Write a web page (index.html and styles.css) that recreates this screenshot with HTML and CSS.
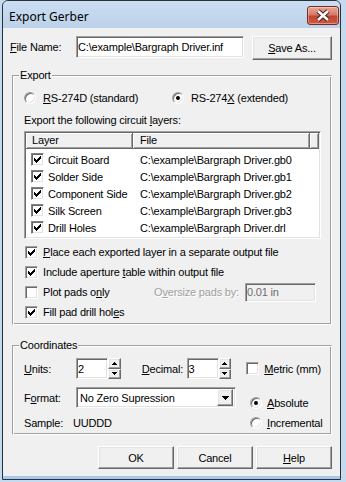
FILE: index.html
```html
<!DOCTYPE html>
<html lang="en">
<head>
    <meta charset="UTF-8">
    <title>Export Gerber</title>
    <link rel="stylesheet" href="styles.css">
</head>
<body>
    <!-- shared pixel glyphs -->
    <svg class="defs" width="0" height="0">
        <symbol id="check" viewBox="0 0 7 7"><path d="M6 0h1v1H6zM5 1h2v1H5zM0 2h1v1H0zM4 2h3v1H4zM0 3h2v1H0zM3 3h3v1H3zM0 4h5v1H0zM1 5h3v1H1zM2 6h1v1H2z"/></symbol>
        <symbol id="up" viewBox="0 0 5 3"><path d="M2 0h1v1H2zM1 1h3v1H1zM0 2h5v1H0z"/></symbol>
        <symbol id="down" viewBox="0 0 5 3"><path d="M0 0h5v1H0zM1 1h3v1H1zM2 2h1v1H2z"/></symbol>
        <symbol id="drop" viewBox="0 0 7 4"><path d="M0 0h7v1H0zM1 1h5v1H1zM2 2h3v1H2zM3 3h1v1H3z"/></symbol>
    </svg>

    <div class="window">
        <div class="titlebar">
            <span class="title">Export Gerber</span>
            <span class="close">
                <svg width="30" height="17" viewBox="0 0 30 17">
                    <path class="x-outline" d="M10 4l10 9M20 4l-10 9"/>
                    <path class="x-fill" d="M10 4l10 9M20 4l-10 9"/>
                </svg>
            </span>
        </div>

        <div class="client">
            <div class="file-row">
                <label class="file-label"><u>F</u>ile Name:</label>
                <input class="field file-field" type="text" value="C:\example\Bargraph Driver.inf">
                <button class="btn save-btn"><u>S</u>ave As...</button>
            </div>

            <div class="group export-group">
                <div class="group-title">Export</div>
                <div class="radio-row">
                    <span class="option first-option"><span class="radio"></span><span><u>R</u>S-274D (standard)</span></span>
                    <span class="option"><span class="radio on"></span><span>RS-274<u>X</u> (extended)</span></span>
                </div>
                <div class="caption">Export the following circuit <u>l</u>ayers:</div>
                <div class="listview">
                    <div class="lv-header">
                        <span class="lv-col col-layer">Layer</span>
                        <span class="lv-col col-file">File</span>
                        <span class="lv-col col-rest"></span>
                    </div>
                    <div class="lv-rows">
                        <div class="lv-row"><span class="col-layer"><span class="checkbox list-box"><svg><use href="#check"/></svg></span>Circuit Board</span><span class="col-file">C:\example\Bargraph Driver.gb0</span></div>
                        <div class="lv-row"><span class="col-layer"><span class="checkbox list-box"><svg><use href="#check"/></svg></span>Solder Side</span><span class="col-file">C:\example\Bargraph Driver.gb1</span></div>
                        <div class="lv-row"><span class="col-layer"><span class="checkbox list-box"><svg><use href="#check"/></svg></span>Component Side</span><span class="col-file">C:\example\Bargraph Driver.gb2</span></div>
                        <div class="lv-row"><span class="col-layer"><span class="checkbox list-box"><svg><use href="#check"/></svg></span>Silk Screen</span><span class="col-file">C:\example\Bargraph Driver.gb3</span></div>
                        <div class="lv-row"><span class="col-layer"><span class="checkbox list-box"><svg><use href="#check"/></svg></span>Drill Holes</span><span class="col-file">C:\example\Bargraph Driver.drl</span></div>
                    </div>
                </div>

                <div class="check-row"><span class="checkbox"><svg><use href="#check"/></svg></span><span><u>P</u>lace each exported layer in a separate output file</span></div>
                <div class="check-row"><span class="checkbox"><svg><use href="#check"/></svg></span><span>Include aperture <u>t</u>able within output file</span></div>
                <div class="check-row">
                    <span class="checkbox"></span><span class="pads-label">Plot pads o<u>n</u>ly</span>
                    <span class="disabled-label">O<u>v</u>ersize pads by:</span>
                    <input class="field oversize-field" type="text" value="0.01 in" disabled>
                </div>
                <div class="check-row"><span class="checkbox"><svg><use href="#check"/></svg></span><span>Fill pad drill hol<u>e</u>s</span></div>
            </div>

            <div class="group coord-group">
                <div class="group-title">Coordinates</div>
                <div class="units-row">
                    <label class="row-label"><u>U</u>nits:</label>
                    <input class="field spin-field" type="text" value="2">
                    <span class="spinner"><span class="spin-btn"><svg><use href="#up"/></svg></span><span class="spin-btn"><svg><use href="#down"/></svg></span></span>
                    <label class="decimal-label"><u>D</u>ecimal:</label>
                    <input class="field spin-field" type="text" value="3">
                    <span class="spinner"><span class="spin-btn"><svg><use href="#up"/></svg></span><span class="spin-btn"><svg><use href="#down"/></svg></span></span>
                    <span class="checkbox metric-box"></span><span><u>M</u>etric (mm)</span>
                </div>
                <div class="lower-block">
                    <div class="left-col">
                        <div class="format-row">
                            <label class="row-label">F<u>o</u>rmat:</label>
                            <span class="field combo"><span class="combo-text">No Zero Supression</span><span class="combo-btn"><svg><use href="#drop"/></svg></span></span>
                        </div>
                        <div class="sample-row">
                            <span class="sample-label">Sample:</span><span>UUDDD</span>
                        </div>
                    </div>
                    <div class="right-col">
                        <span class="option abs-option"><span class="radio on"></span><span><u>A</u>bsolute</span></span>
                        <span class="option inc-option"><span class="radio"></span><span><u>I</u>ncremental</span></span>
                    </div>
                </div>
            </div>

            <div class="button-row">
                <button class="btn">OK</button>
                <button class="btn">Cancel</button>
                <button class="btn"><u>H</u>elp</button>
            </div>
        </div>
    </div>
</body>
</html>
```

FILE: styles.css
```css
body {
    margin: 0;
    background-color: #c6daef;
    font-family: "Liberation Sans", Arial, sans-serif;
    font-size: 11px;
    letter-spacing: -0.18px;
    white-space: nowrap;
    color: #000;
}
.defs {
    position: absolute;
    width: 0;
    height: 0;
}

/* window frame */
.window {
    margin-left: 2px;
    width: 337px;
    height: 478px;
    background-color: #a9c8ea;
    border: 1px solid #27313c;
    border-radius: 6px 6px 0 0;
    display: flex;
    flex-direction: column;
}
.titlebar {
    height: 27px;
    display: flex;
    justify-content: space-between;
    align-items: flex-start;
    background: linear-gradient(#cbddf1, #bcd2ea);
    border-radius: 5px 5px 0 0;
}
.title {
    font-family: "Noto Sans", "Open Sans", sans-serif;
    font-size: 12px;
    letter-spacing: 0;
    line-height: 25px;
    padding: 3px 0 0 6px;
}
.close {
    margin: 5px 1px 0 0;
    width: 32px;
    height: 19px;
    box-sizing: border-box;
    border: 1px solid #7a2a21;
    border-radius: 3px;
    background: linear-gradient(#e9a898 0%, #d77a66 45%, #c4442f 55%, #cc5a43 100%);
    box-shadow: inset 0 0 0 1px rgba(255, 255, 255, 0.35);
    display: flex;
}
.close svg {
    display: block;
}
.x-outline {
    stroke: #4a2420;
    stroke-width: 4.6;
    fill: none;
}
.x-fill {
    stroke: #fff;
    stroke-width: 2.4;
    fill: none;
}

.client {
    height: 448px;
    box-sizing: border-box;
    background-color: #f0f0f0;
    padding: 8px 8px 0 9px;
}

/* classic 3d controls */
.field {
    box-sizing: border-box;
    margin: 0;
    padding: 0 1px;
    font: inherit;
    letter-spacing: inherit;
    color: #000;
    background-color: #fff;
    border: 1px solid;
    border-color: #a0a0a0 #fff #fff #a0a0a0;
    box-shadow: inset 1px 1px #696969, inset -1px -1px #e3e3e3;
    outline: none;
}
.btn {
    box-sizing: border-box;
    margin: 0;
    padding: 0;
    font: inherit;
    letter-spacing: inherit;
    color: #000;
    background-color: #f0f0f0;
    border: 1px solid;
    border-color: #fff #696969 #696969 #fff;
    box-shadow: inset -1px -1px #a0a0a0, inset 1px 1px #e3e3e3;
}
.checkbox {
    width: 13px;
    height: 13px;
    box-sizing: border-box;
    flex: none;
    background-color: #fff;
    border: 1px solid;
    border-color: #a0a0a0 #fff #fff #a0a0a0;
    box-shadow: inset 1px 1px #696969, inset -1px -1px #e3e3e3;
    display: flex;
    align-items: center;
    justify-content: center;
}
.checkbox svg {
    width: 7px;
    height: 7px;
}
.radio {
    position: relative;
    width: 12px;
    height: 12px;
    box-sizing: border-box;
    flex: none;
    border-radius: 50%;
    background-color: #fff;
    border: 1px solid;
    border-color: #a0a0a0 #fff #fff #a0a0a0;
    box-shadow: inset 1px 1px #696969, inset -1px -1px #e3e3e3;
}
.radio.on::after {
    content: "";
    position: absolute;
    left: 3px;
    top: 3px;
    width: 4px;
    height: 4px;
    border-radius: 50%;
    background-color: #000;
}
.option {
    display: flex;
    align-items: center;
    gap: 7px;
}

/* file name row */
.file-row {
    display: flex;
    align-items: flex-start;
    margin-left: -2px;
    height: 24px;
}
.file-label {
    width: 66px;
    line-height: 22px;
}
.file-field {
    width: 168px;
    height: 22px;
}
.save-btn {
    margin-left: 8px;
    width: 80px;
    height: 24px;
}

/* group boxes */
.group {
    border: 1px solid;
    border-color: #a0a0a0 #fff #fff #a0a0a0;
    box-shadow: inset 1px 1px #fff, inset -1px -1px #a0a0a0;
    padding: 0 10px 2px 11px;
}
.group-title {
    width: fit-content;
    margin: -7px 0 0 -5px;
    padding: 0 1px;
    line-height: 13px;
    background-color: #f0f0f0;
}
.export-group {
    margin-top: 15px;
}
.radio-row {
    display: flex;
    align-items: center;
    height: 16px;
    margin-top: 8px;
}
.first-option {
    width: 148px;
}
.caption {
    margin-top: 7px;
    line-height: 14px;
}

/* layer list */
.listview {
    margin-top: 4px;
    height: 108px;
    box-sizing: border-box;
    background-color: #fff;
    border: 1px solid;
    border-color: #a0a0a0 #fff #fff #a0a0a0;
    box-shadow: inset 1px 1px #696969, inset -1px -1px #e3e3e3;
    padding: 1px;
}
.lv-header {
    display: flex;
    height: 16px;
}
.lv-col {
    box-sizing: border-box;
    height: 16px;
    line-height: 15px;
    background-color: #f0f0f0;
    border-right: 1px solid #696969;
    border-bottom: 1px solid #696969;
    box-shadow: inset 1px 1px #fff, inset -1px -1px #a0a0a0;
}
.lv-header .col-layer {
    padding-left: 6px;
}
.lv-header .col-file {
    padding-left: 7px;
}
.col-layer {
    width: 107px;
    flex: none;
}
.col-file {
    width: 177px;
    flex: none;
}
.col-rest {
    flex: 1;
}
.lv-rows {
    padding-top: 2px;
}
.lv-row {
    display: flex;
    height: 17px;
    align-items: center;
}
.lv-row .col-layer {
    display: flex;
    align-items: center;
    gap: 4px;
    padding-left: 5px;
    box-sizing: border-box;
}
.lv-row .col-file {
    padding-left: 7px;
}
.list-box {
    border-color: #828282 #fff #fff #828282;
}

/* option checkboxes */
.check-row {
    display: flex;
    align-items: center;
    height: 20px;
    padding-left: 1px;
    gap: 5px;
}
.listview + .check-row {
    margin-top: 3px;
}
.pads-label {
    width: 106px;
}
.disabled-label {
    color: #a0a0a0;
    text-shadow: 1px 1px 0 #fff;
    width: 86px;
}
.oversize-field {
    width: 71px;
    height: 19px;
    background-color: #f0f0f0;
    color: #6d6d6d;
}

/* coordinates */
.coord-group {
    margin-top: 20px;
    padding-bottom: 3px;
}
.units-row {
    display: flex;
    align-items: center;
    height: 21px;
    margin-top: 6px;
}
.row-label {
    width: 52px;
    flex: none;
}
.spin-field {
    width: 32px;
    height: 21px;
}
.spinner {
    display: flex;
    flex-direction: column;
    width: 13px;
    height: 21px;
}
.spin-btn {
    flex: 1;
    box-sizing: border-box;
    background-color: #f0f0f0;
    border: 1px solid;
    border-color: #fff #696969 #696969 #fff;
    box-shadow: inset -1px -1px #a0a0a0, inset 1px 1px #e3e3e3;
    display: flex;
    align-items: center;
    justify-content: center;
}
.spin-btn svg {
    width: 5px;
    height: 3px;
}
.decimal-label {
    margin-left: 21px;
    width: 46px;
}
.metric-box {
    margin: 0 5px 0 15px;
}
.lower-block {
    display: flex;
    margin-top: 8px;
}
.left-col {
    width: 212px;
}
.format-row {
    display: flex;
    align-items: center;
    height: 21px;
}
.combo {
    width: 160px;
    height: 21px;
    display: flex;
    align-items: center;
    justify-content: space-between;
    padding: 2px;
}
.combo-text {
    padding-left: 1px;
}
.combo-btn {
    width: 16px;
    height: 17px;
    box-sizing: border-box;
    background-color: #f0f0f0;
    border: 1px solid;
    border-color: #fff #696969 #696969 #fff;
    box-shadow: inset -1px -1px #a0a0a0, inset 1px 1px #e3e3e3;
    display: flex;
    align-items: center;
    justify-content: center;
}
.combo-btn svg {
    width: 7px;
    height: 4px;
}
.sample-row {
    display: flex;
    align-items: center;
    height: 14px;
    margin-top: 8px;
}
.sample-label {
    width: 49px;
}
.right-col {
    margin-left: 14px;
    display: flex;
    flex-direction: column;
}
.abs-option {
    height: 16px;
    margin-top: 8px;
    gap: 5px;
}
.inc-option {
    height: 16px;
    margin-top: 4px;
    gap: 5px;
}

/* dialog buttons */
.button-row {
    display: flex;
    justify-content: flex-end;
    gap: 3px;
    margin-top: 11px;
}
.button-row .btn {
    width: 76px;
    height: 23px;
}
```
